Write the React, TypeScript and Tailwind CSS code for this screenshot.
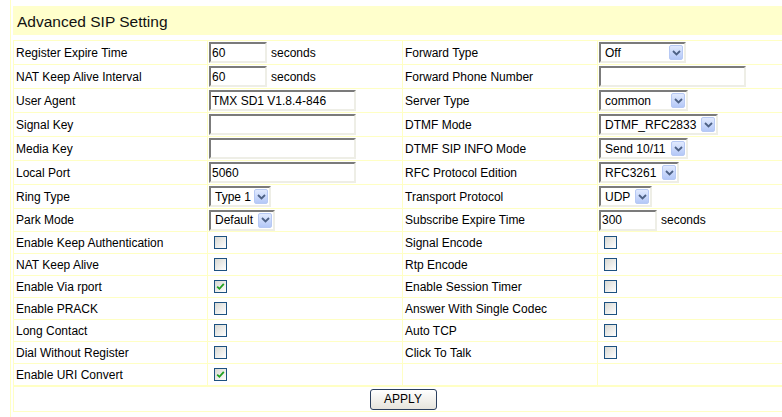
import React from "react";

const LINE = "border-[#ffffc4]";

function TextBox({ w, value = "", unit }: { w: number; value?: string; unit?: string }) {
  return (
    <div className="flex items-center">
      <div
        className="h-[21px] bg-white border-2 border-t-[#7b7b7b] border-l-[#7b7b7b] border-b-[#eeeee6] border-r-[#eeeee6] flex items-center pl-[1px] text-[12px] leading-none whitespace-pre overflow-hidden"
        style={{ width: w }}
      >
        {value}
      </div>
      {unit && <span className="ml-[4px] text-[12px]">{unit}</span>}
    </div>
  );
}

function Select({ w, value }: { w: number; value: string }) {
  return (
    <div
      className="h-[21px] bg-white border-2 border-t-[#7b7b7b] border-l-[#7b7b7b] border-b-[#eeeee6] border-r-[#eeeee6] flex items-center justify-between pl-[4px] pr-[1px] text-[12px] leading-none whitespace-pre"
      style={{ width: w }}
    >
      <span>{value}</span>
      <div className="w-[14px] h-[15px] rounded-[2px] border border-[#b7c9f4] bg-gradient-to-b from-[#e1eafe] to-[#b4c8f7] flex items-center justify-center">
        <svg width="9" height="6" viewBox="0 0 9 6">
          <path d="M1 1 L4.5 4.5 L8 1" fill="none" stroke="#4d6185" strokeWidth="1.8" />
        </svg>
      </div>
    </div>
  );
}

function Check({ on }: { on: boolean }) {
  return (
    <div className="ml-[5px] w-[13px] h-[13px] border border-[#1c5180] bg-gradient-to-br from-[#d8d8d2] to-[#ffffff] flex items-center justify-center">
      {on && (
        <svg width="9" height="9" viewBox="0 0 9 9">
          <path d="M1.2 4.6 L3.4 6.8 L7.8 1.8" fill="none" stroke="#21a121" strokeWidth="1.8" />
        </svg>
      )}
    </div>
  );
}

type Row = { h: number; l: string; lc: React.ReactNode; r: string; rc: React.ReactNode };

const rows: Row[] = [
  { h: 24, l: "Register Expire Time", lc: <TextBox w={58} value="60" unit="seconds" />, r: "Forward Type", rc: <Select w={87} value="Off" /> },
  { h: 24, l: "NAT Keep Alive Interval", lc: <TextBox w={58} value="60" unit="seconds" />, r: "Forward Phone Number", rc: <TextBox w={147} /> },
  { h: 24, l: "User Agent", lc: <TextBox w={147} value="TMX SD1 V1.8.4-846" />, r: "Server Type", rc: <Select w={89} value="common" /> },
  { h: 24, l: "Signal Key", lc: <TextBox w={147} />, r: "DTMF Mode", rc: <Select w={119} value="DTMF_RFC2833" /> },
  { h: 24, l: "Media Key", lc: <TextBox w={147} />, r: "DTMF SIP INFO Mode", rc: <Select w={89} value="Send 10/11" /> },
  { h: 24, l: "Local Port", lc: <TextBox w={147} value="5060" />, r: "RFC Protocol Edition", rc: <Select w={80} value="RFC3261" /> },
  { h: 24, l: "Ring Type", lc: <Select w={62} value="Type 1" />, r: "Transport Protocol", rc: <Select w={53} value="UDP" /> },
  { h: 23, l: "Park Mode", lc: <Select w={66} value="Default" />, r: "Subscribe Expire Time", rc: <TextBox w={58} value="300" unit="seconds" /> },
  { h: 22, l: "Enable Keep Authentication", lc: <Check on={false} />, r: "Signal Encode", rc: <Check on={false} /> },
  { h: 22, l: "NAT Keep Alive", lc: <Check on={false} />, r: "Rtp Encode", rc: <Check on={false} /> },
  { h: 22, l: "Enable Via rport", lc: <Check on={true} />, r: "Enable Session Timer", rc: <Check on={false} /> },
  { h: 22, l: "Enable PRACK", lc: <Check on={false} />, r: "Answer With Single Codec", rc: <Check on={false} /> },
  { h: 22, l: "Long Contact", lc: <Check on={false} />, r: "Auto TCP", rc: <Check on={false} /> },
  { h: 22, l: "Dial Without Register", lc: <Check on={false} />, r: "Click To Talk", rc: <Check on={false} /> },
  { h: 22, l: "Enable URI Convert", lc: <Check on={true} />, r: "", rc: null },
];

export default function App() {
  return (
    <div className="w-[782px] h-[417px] overflow-hidden bg-white font-['Liberation_Sans',Arial,sans-serif] text-[12px] text-black">
      <div className={`ml-[10px] h-full border-l ${LINE} pl-[2px] pt-[6px]`}>
        <div className="w-[800px] h-[29px] bg-[#ffffcc] flex items-center pl-[4px] pt-[3px] text-[15.5px] text-[#111]">
          Advanced SIP Setting
        </div>
        <div className={`mt-[5px] w-[780px] border-t border-l ${LINE}`}>
          {rows.map((row, i) => (
            <div key={i} className="grid grid-cols-[194px_195px_195px_196px]" style={{ height: row.h }}>
              <div className={`border-r border-b ${LINE} flex items-center pl-[2px]`}>{row.l}</div>
              <div className={`border-r border-b ${LINE} flex items-center pl-[1px]`}>{row.lc}</div>
              <div className={`border-r border-b ${LINE} flex items-center pl-[2px]`}>{row.r}</div>
              <div className={`border-r border-b ${LINE} flex items-center pl-[1px]`}>{row.rc}</div>
            </div>
          ))}
        </div>
        <div className={`w-[780px] h-[26px] border ${LINE} flex items-center justify-center`}>
          <button className="w-[67px] h-[21px] rounded-[3px] border border-[#2b3f5e] bg-gradient-to-b from-[#ffffff] to-[#e6e4dc] text-[12px] leading-none text-black flex items-center justify-center">
            APPLY
          </button>
        </div>
      </div>
    </div>
  );
}
